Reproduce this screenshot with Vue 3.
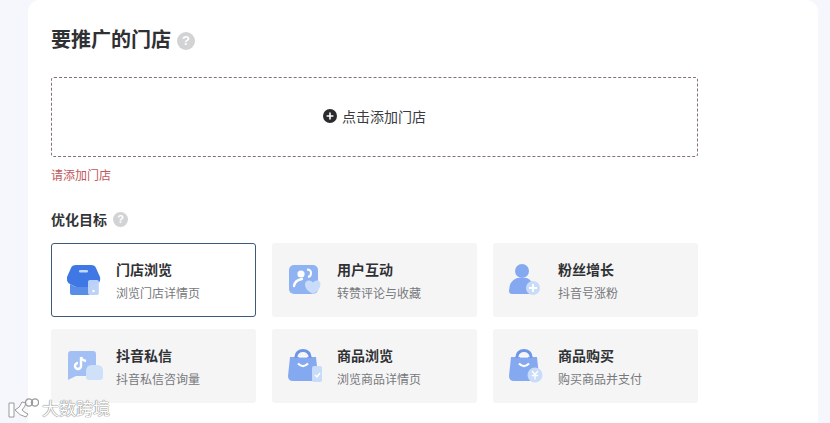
<template>
  <div class="page">
    <div class="panel">
      <div class="heading">
        <h2 class="title">要推广的门店</h2>
        <span class="help help-lg">?</span>
      </div>

      <div class="add-box">
        <svg class="plus" width="14" height="14" viewBox="0 0 14 14">
          <circle cx="7" cy="7" r="7" fill="#2b2b2d" />
          <path d="M7 3.6v6.8M3.6 7h6.8" stroke="#fff" stroke-width="1.6" />
        </svg>
        <span>点击添加门店</span>
      </div>
      <p class="error">请添加门店</p>

      <div class="sub-heading">
        <span class="sub-title">优化目标</span>
        <span class="help help-sm">?</span>
      </div>

      <div class="goals">
        <div v-for="goal in goals" :key="goal.name" class="goal" :class="{ active: goal.active }">
          <svg class="goal-icon" width="36" height="36" viewBox="0 0 36 36">
            <template v-if="goal.icon === 'store'">
              <path d="M5 25h23v6q0 2-2 2H7q-2 0-2-2z" fill="#5a8de6" />
              <path d="M9 3h15q4 0 5 3l4 9q1 5-3 7l-7 3H9l-6-3q-4-2-3-7L4 6q1-3 5-3z" fill="#3f78e4" />
              <path d="M3 22l6 3h15l7-3v9q0 2-2 2H5q-2 0-2-2z" fill="#5a8de6" />
              <rect x="12" y="8" width="9" height="2.4" rx="1.2" fill="#c4d8fa" />
              <rect x="21" y="18" width="11" height="15" rx="2" fill="#c5d8f8" opacity=".92" />
              <circle cx="26.500" cy="29" r="1.200" fill="#fff" />
            </template>
            <template v-else-if="goal.icon === 'users'">
              <rect x="1" y="3" width="29" height="29" rx="5" fill="#8fb2f3" />
              <circle cx="13" cy="12" r="3.600" fill="#fff" />
              <path d="M6 24q1-6 8-7" fill="none" stroke="#fff" stroke-width="2.400" stroke-linecap="round" />
              <path d="M19 7.500q4 0 4 3.500t-3 4" fill="none" stroke="#fff" stroke-width="2" />
              <path d="M25 32q-8-4-8-9 0-5 4.500-4.500 2.500.3 3.500 2 1-1.700 3.500-2 3.500-.5 4 3.500 0 6-7.500 10z" fill="#c9ddfa" />
            </template>
            <template v-else-if="goal.icon === 'fans'">
              <circle cx="13" cy="9" r="7" fill="#85a9f0" />
              <path d="M0 29q0-10 8-13h10q7 3 7 13 0 3-3 3H3q-3 0-3-3z" fill="#85a9f0" />
              <circle cx="24" cy="26" r="7" fill="#c8dcfa" />
              <path d="M24 22v8M20 26h8" stroke="#fff" stroke-width="1.800" />
            </template>
            <template v-else-if="goal.icon === 'tiktok'">
              <path d="M4 3h22q3 0 3 3v19q0 3-3 3H9l-8 4V6q0-3 3-3z" fill="#a3c0f4" />
              <path d="M14 9v9a3 3 0 1 1-3-3M14 9q1 3.500 5 4" fill="none" stroke="#fff" stroke-width="2.400" />
              <path d="M25 17h5q6 0 6 6v6q0 3-3 3H22q-3 0-3-3v-6q0-6 6-6z" fill="#cfe0f9" />
            </template>
            <template v-else>
              <path d="M2 9h26l2 19q0 5-5 5H5q-5 0-5-5z" fill="#85a9f0" />
              <path d="M8 10V8.500a7 6 0 0 1 14 0V10" fill="none" stroke="#6f96e4" stroke-width="3" />
              <path d="M10 15.500q5 5 10 0" fill="none" stroke="#fff" stroke-width="2.200" />
              <path d="M11 9h8" stroke="#fff" stroke-width="1" />
              <template v-if="goal.icon === 'goods'">
                <rect x="24" y="18" width="10" height="16" rx="2" fill="#c8dcfa" />
                <path d="M27 27l2 2 3-4" fill="none" stroke="#fff" stroke-width="1.400" />
              </template>
              <template v-else>
                <circle cx="26" cy="27" r="7.500" fill="#c8dcfa" />
                <path d="M23 23l3 3.500 3-3.500M22.800 27.500h6.400M26 26.500v5" fill="none" stroke="#fff" stroke-width="1.300" />
              </template>
            </template>
          </svg>
          <div class="goal-text">
            <div class="goal-name">{{ goal.name }}</div>
            <div class="goal-desc">{{ goal.desc }}</div>
          </div>
        </div>
      </div>
    </div>

    <div class="watermark">
      <svg width="31" height="20" viewBox="0 0 31 20">
        <g fill="#fff" stroke="#9a9a9a" stroke-width="1">
          <path d="M1 5h5v14H1z" />
          <path d="M7 12q5-2 7-8l4 1q-1 4-4 7 3 3 6 4l-2 3q-6-1-11-7z" />
        </g>
        <g fill="none" stroke="#9a9a9a" stroke-width="1.300">
          <circle cx="21" cy="4.500" r="3.600" />
          <circle cx="27" cy="4.500" r="3.600" />
        </g>
      </svg>
      <span>大数跨境</span>
    </div>
  </div>
</template>

<script setup>
  const goals = [
    { name: '门店浏览', desc: '浏览门店详情页', icon: 'store', active: true },
    { name: '用户互动', desc: '转赞评论与收藏', icon: 'users' },
    { name: '粉丝增长', desc: '抖音号涨粉', icon: 'fans' },
    { name: '抖音私信', desc: '抖音私信咨询量', icon: 'tiktok' },
    { name: '商品浏览', desc: '浏览商品详情页', icon: 'goods' },
    { name: '商品购买', desc: '购买商品并支付', icon: 'buy' },
  ];
</script>

<style>
  html,
  body {
    margin: 0;
    background: #f5f7fd;
  }
</style>

<style scoped>
  .page {
    position: relative;
    height: 423px;
    overflow: hidden;
    padding: 0 12px 0 28px;
    box-sizing: border-box;
    background: #f5f7fd;
    font-family: "Liberation Sans", "Noto Sans CJK SC", sans-serif;
  }
  .panel {
    height: 423px;
    padding: 24px 0 0 23px;
    box-sizing: border-box;
    background: #fff;
    border-radius: 12px 12px 0 0;
  }
  .heading {
    display: flex;
    align-items: center;
    gap: 6px;
    height: 32px;
  }
  .title {
    margin: 0;
    font-size: 20px;
    font-weight: 700;
    line-height: 32px;
    color: #2f3033;
  }
  .help {
    display: flex;
    align-items: center;
    justify-content: center;
    border-radius: 50%;
    background: #d2d3d5;
    color: #fff;
    font-weight: 700;
  }
  .help-lg {
    width: 18px;
    height: 18px;
    font-size: 13px;
    margin-top: 1px;
  }
  .help-sm {
    width: 15px;
    height: 15px;
    font-size: 11px;
  }
  .add-box {
    display: flex;
    align-items: center;
    justify-content: center;
    gap: 5px;
    width: 647px;
    height: 80px;
    margin-top: 21px;
    padding-bottom: 2px;
    box-sizing: border-box;
    border: 1px dashed #8a6f72;
    border-radius: 3px;
    font-size: 14px;
    color: #3a3b3e;
  }
  .error {
    margin: 10px 0 0;
    font-size: 12px;
    line-height: 18px;
    color: #c0575c;
  }
  .sub-heading {
    display: flex;
    align-items: center;
    gap: 6px;
    height: 20px;
    margin-top: 24px;
  }
  .sub-title {
    font-size: 14px;
    font-weight: 700;
    color: #333437;
  }
  .goals {
    display: grid;
    grid-template-columns: repeat(3, 205px);
    grid-auto-rows: 74px;
    gap: 12px 16px;
    margin-top: 14px;
  }
  .goal {
    display: flex;
    align-items: center;
    gap: 11px;
    padding-left: 15px;
    box-sizing: border-box;
    border: 1px solid transparent;
    border-radius: 3px;
    background: #f5f5f6;
  }
  .goal.active {
    background: #fff;
    border-color: #3c5a7c;
  }
  .goal-icon {
    flex: none;
  }
  .goal-text {
    padding-top: 3px;
    margin-left: 2px;
  }
  .goal-name {
    font-size: 14px;
    font-weight: 700;
    line-height: 18px;
    color: #303134;
  }
  .goal-desc {
    margin-top: 7px;
    font-size: 12px;
    line-height: 17px;
    color: #77787b;
  }
  .watermark {
    position: absolute;
    left: 8px;
    top: 395px;
    display: flex;
    align-items: center;
    gap: 3px;
    font-size: 17px;
    color: #fff;
    text-shadow: 0 0 1px #8c8c8c, 0 0 1px #8c8c8c, 0 0 1px #8c8c8c;
  }
</style>
